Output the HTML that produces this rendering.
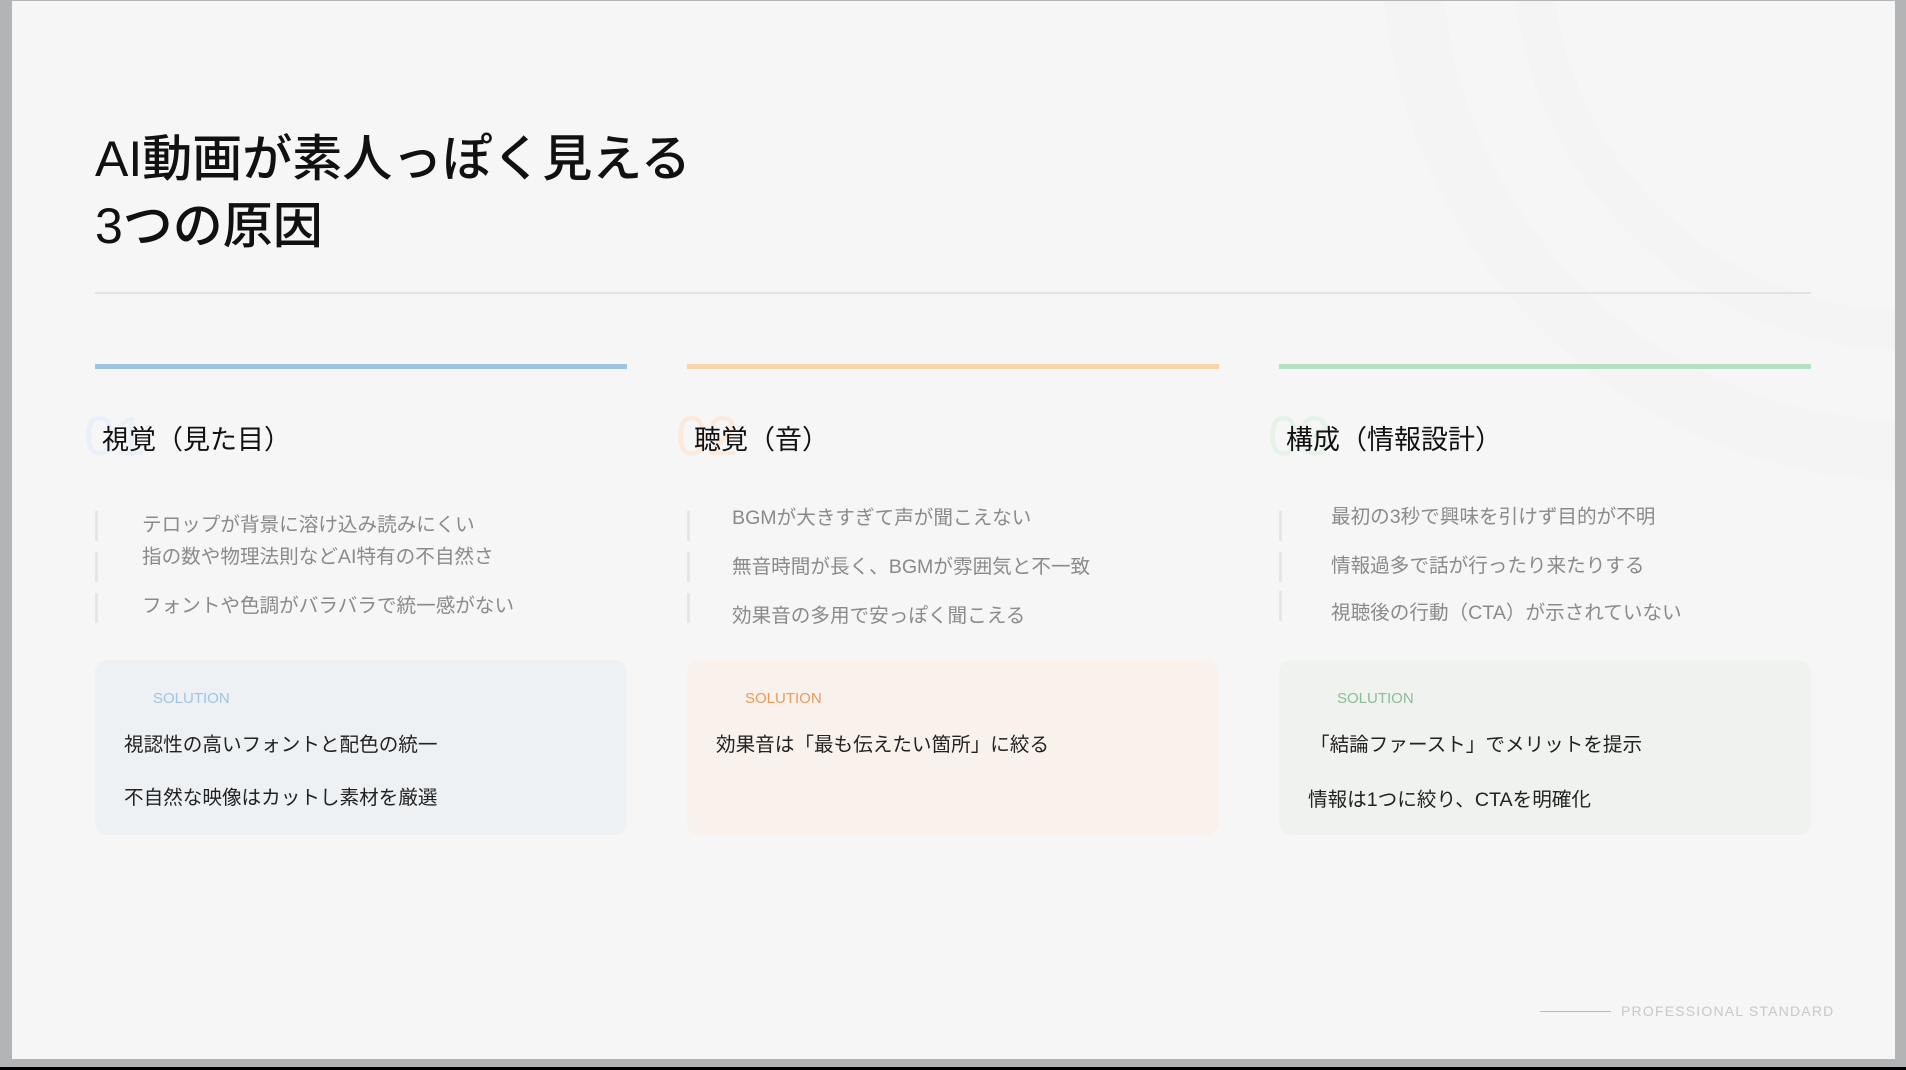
<!DOCTYPE html>
<html><head><meta charset="utf-8"><style>
*{margin:0;padding:0;box-sizing:border-box}
body{width:1906px;height:1070px;background:#000;position:relative;overflow:hidden;font-family:"Liberation Sans","Noto Sans CJK JP",sans-serif}
.frame{position:absolute;left:0;top:0;width:1906px;height:1067px;background:#b3b4b5}
.slide{position:absolute;left:12px;top:1px;width:1883px;height:1058px;background:#f6f6f6;overflow:hidden}
.a{position:absolute;white-space:nowrap}
.title{left:83px;top:125px;font-size:50px;line-height:67px;color:#111;font-weight:500}
.rule{left:83px;top:291px;width:1716px;height:2px;background:#e2e2e2}
.bar{top:363px;height:5px;width:532px}
.num{font-size:56px;font-weight:300;top:402px}
.h{font-size:27px;color:#111;top:417px}
.bl{width:3px;height:30px;background:#e3e5e9}
.bt{font-size:19.6px;color:#8a8a8a}
.box{top:659px;width:532px;height:175px;border-radius:12px}
.sl{font-size:15px;top:689px}
.st{font-size:19.6px;color:#222}
</style></head><body>
<div class="frame"></div>
<div class="slide">
<svg class="a" style="left:1000px;top:-200px" width="900" height="700"><circle cx="900" cy="150" r="500" fill="none" stroke="#f4f4f4" stroke-width="60"/><circle cx="900" cy="150" r="380" fill="none" stroke="#f4f4f4" stroke-width="40"/></svg>
<div class="a title">AI動画が素人っぽく見える<br>3つの原因</div>
<div class="a rule"></div>

<div class="a bar" style="left:83px;background:#9dc3e3"></div>
<div class="a bar" style="left:675px;background:#fdd4a8"></div>
<div class="a bar" style="left:1267px;background:#b7e0c2"></div>

<div class="a num" style="left:72px;color:#eaf0f8">01</div>
<div class="a num" style="left:664px;color:#fbeadb">02</div>
<div class="a num" style="left:1256px;color:#e6f1e8">03</div>
<div class="a h" style="left:90px">視覚（見た目）</div>
<div class="a h" style="left:682px">聴覚（音）</div>
<div class="a h" style="left:1274px">構成（情報設計）</div>

<div class="a bl" style="left:83px;top:510px"></div>
<div class="a bl" style="left:83px;top:551px"></div>
<div class="a bl" style="left:83px;top:592px"></div>
<div class="a bt" style="left:130px;top:507px">テロップが背景に溶け込み読みにくい</div>
<div class="a bt" style="left:130px;top:539px">指の数や物理法則などAI特有の不自然さ</div>
<div class="a bt" style="left:130px;top:588px">フォントや色調がバラバラで統一感がない</div>

<div class="a bl" style="left:675px;top:510px"></div>
<div class="a bl" style="left:675px;top:551px"></div>
<div class="a bl" style="left:675px;top:592px"></div>
<div class="a bt" style="left:720px;top:500px">BGMが大きすぎて声が聞こえない</div>
<div class="a bt" style="left:720px;top:549px">無音時間が長く、BGMが雰囲気と不一致</div>
<div class="a bt" style="left:720px;top:598px">効果音の多用で安っぽく聞こえる</div>

<div class="a bl" style="left:1267px;top:510px"></div>
<div class="a bl" style="left:1267px;top:551px"></div>
<div class="a bl" style="left:1267px;top:590px"></div>
<div class="a bt" style="left:1319px;top:499px">最初の3秒で興味を引けず目的が不明</div>
<div class="a bt" style="left:1319px;top:548px">情報過多で話が行ったり来たりする</div>
<div class="a bt" style="left:1319px;top:595px">視聴後の行動（CTA）が示されていない</div>

<div class="a box" style="left:83px;background:#edf1f4"></div>
<div class="a box" style="left:675px;background:#f8f1ec"></div>
<div class="a box" style="left:1267px;background:#f0f2ef"></div>
<div class="a sl" style="left:141px;color:#9ec4e6">SOLUTION</div>
<div class="a sl" style="left:733px;color:#eb9a58">SOLUTION</div>
<div class="a sl" style="left:1325px;color:#88bd96">SOLUTION</div>
<div class="a st" style="left:112px;top:727px">視認性の高いフォントと配色の統一</div>
<div class="a st" style="left:112px;top:780px">不自然な映像はカットし素材を厳選</div>
<div class="a st" style="left:704px;top:727px">効果音は「最も伝えたい箇所」に絞る</div>
<div class="a st" style="left:1298px;top:727px">「結論ファースト」でメリットを提示</div>
<div class="a st" style="left:1296px;top:782px">情報は1つに絞り、CTAを明確化</div>

<div class="a" style="left:1528px;top:1010px;width:71px;height:1px;background:#bbb"></div>
<div class="a" style="left:1609px;top:1002px;font-size:14px;letter-spacing:1.2px;color:#c8c8c8">PROFESSIONAL STANDARD</div>
</div>
</body></html>
